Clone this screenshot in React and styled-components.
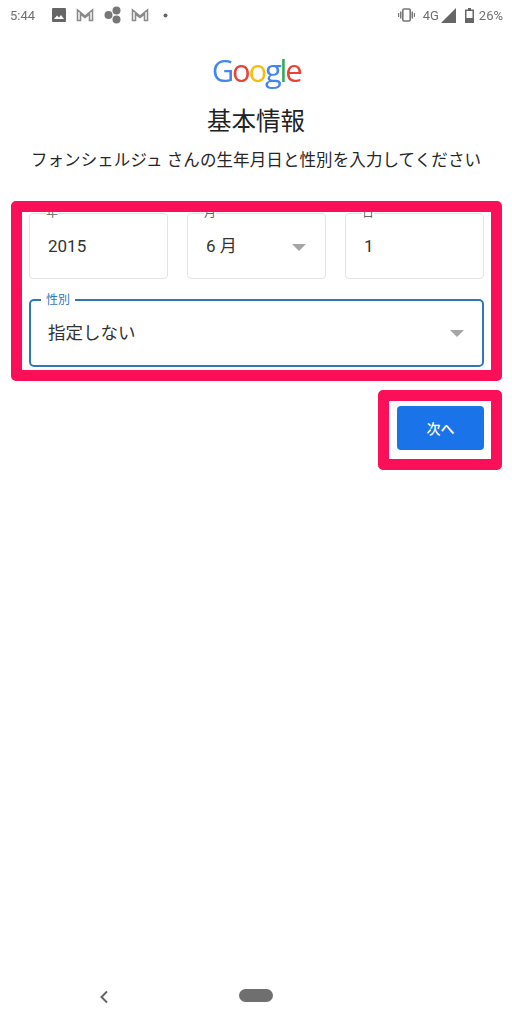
import React from "react";
import styled, { createGlobalStyle } from "styled-components";

const Global = createGlobalStyle`
  html, body { margin: 0; padding: 0; background: #fff; }
  body { font-family: Roboto, "Noto Sans CJK JP", sans-serif; }
  * { box-sizing: border-box; }
`;

const Page = styled.div`
  width: 512px;
  height: 1024px;
  display: flex;
  flex-direction: column;
  overflow: hidden;
  background: #fff;
  color: #222;
`;

const StatusBar = styled.div`
  height: 30px;
  display: flex;
  align-items: center;
  justify-content: space-between;
  padding: 0 9px 0 10px;
  color: #707070;
  font-size: 13px;
  filter: blur(0.4px);
`;

const StatusGroup = styled.div`
  display: flex;
  align-items: center;
`;

const StatusSvg = styled.svg`
  display: block;
  flex: none;
  margin-left: ${(p) => p.$ml || 0}px;
`;

const StatusText = styled.span`
  margin-left: ${(p) => p.$ml || 0}px;
`;

const Wordmark = styled.div`
  margin-top: 19px;
  height: 42px;
  text-align: center;
  font-family: "Open Sans", sans-serif;
  font-size: 31px;
  line-height: 42px;
  letter-spacing: -2.2px;
  font-weight: 500;
  filter: blur(0.3px);
`;

const Letter = styled.span`
  color: ${(p) => p.$c};
`;

const Title = styled.h1`
  margin: 14px 0 0;
  text-align: center;
  font-size: 24.5px;
  line-height: 34px;
  font-weight: 400;
  color: #222;
`;

const Subtitle = styled.p`
  margin: 10px 0 0;
  text-align: center;
  font-size: 16.5px;
  line-height: 24px;
  color: #262626;
  letter-spacing: 0.1px;
`;

const Highlight = styled.div`
  margin: ${(p) => p.$mt}px 10px 0 ${(p) => p.$ml}px;
  border: 11px solid #fb0f58;
  border-radius: 5px;
  overflow: hidden;
  background: #fff;
`;

const FieldRow = styled.div`
  display: grid;
  grid-template-columns: 139px 139px 139px;
  gap: 19px;
  padding: 1px 7px 0;
`;

const Field = styled.div`
  position: relative;
  height: 66px;
  border: 1px solid #e4e4e4;
  border-radius: 4px;
  padding: 20px 0 0 18px;
  font-size: 17px;
  line-height: 24px;
  color: #333;
`;

const TopLabel = styled.span`
  position: absolute;
  left: 16px;
  top: -9px;
  font-size: 12px;
  line-height: 16px;
  color: #666;
  background: #fff;
`;

const Caret = styled.span`
  position: absolute;
  right: ${(p) => p.$r}px;
  top: ${(p) => p.$t}px;
  width: 0;
  height: 0;
  border-left: 7px solid transparent;
  border-right: 7px solid transparent;
  border-top: 7px solid #a6a6a6;
`;

const GenderWrap = styled.div`
  padding: 20px 7px 3px;
`;

const GenderField = styled.div`
  position: relative;
  height: 68px;
  border: 2px solid #3278b8;
  border-radius: 5px;
  padding: 20px 0 0 17px;
  font-size: 17.5px;
  line-height: 24px;
  color: #333;
`;

const GenderLabel = styled.span`
  position: absolute;
  left: 10px;
  top: -8px;
  padding: 0 5px;
  background: #fff;
  font-size: 12px;
  line-height: 14px;
  color: #3278b8;
`;

const ActionRow = styled.div`
  display: flex;
  justify-content: flex-end;
`;

const NextButton = styled.button`
  display: block;
  width: 87px;
  height: 44px;
  margin: 5px 7px 9px 8px;
  border: 0;
  border-radius: 4px;
  background: #1a73e8;
  color: #fff;
  font: 500 14px Roboto, "Noto Sans CJK JP", sans-serif;
`;

const NavBar = styled.div`
  margin-top: auto;
  height: 42px;
  display: flex;
  align-items: flex-start;
  padding: 7px 0 0 99px;
`;

const BackIcon = styled.svg`
  display: block;
  margin-top: 1px;
`;

const Pill = styled.div`
  width: 34px;
  height: 13px;
  border-radius: 7px;
  background: #6f6f6f;
  margin-left: 130px;
`;

const Gmail = ({ ml }) => (
  <StatusSvg $ml={ml} width="18" height="14" viewBox="0 0 18 14" fill="none" stroke="#8a8a8a" strokeWidth="1.6">
    <path d="M1.5 12.5V2l7.500 6 7.500-6v10.500h-3V6L9 9.500 4.500 6v6.500z" />
  </StatusSvg>
);

export default function App() {
  return (
    <Page>
      <Global />
      <StatusBar>
        <StatusGroup>
          <span>5:44</span>
          <StatusSvg $ml={17} width="14" height="14" viewBox="0 0 14 14">
            <rect width="14" height="14" rx="1" fill="#666" />
            <path d="M2 11l3-3.500 2 2 2-2.500 3 4z" fill="#fff" />
          </StatusSvg>
          <Gmail ml={10} />
          <StatusSvg $ml={10} width="18" height="18" viewBox="0 0 18 18" fill="#777">
            <circle cx="4.500" cy="9" r="4" />
            <circle cx="12.500" cy="4.500" r="4" />
            <circle cx="12.500" cy="13.500" r="4" />
          </StatusSvg>
          <Gmail ml={9} />
          <StatusSvg $ml={14} width="5" height="5" viewBox="0 0 5 5">
            <circle cx="2.500" cy="2.500" r="2" fill="#666" />
          </StatusSvg>
        </StatusGroup>
        <StatusGroup>
          <StatusSvg width="17" height="14" viewBox="0 0 17 14" fill="#777">
            <rect x="4.800" y="1" width="7.400" height="12" rx="1.200" fill="none" stroke="#777" strokeWidth="1.600" />
            <rect x="2" y="3.500" width="1.500" height="7" />
            <rect x="13.500" y="3.500" width="1.500" height="7" />
            <rect x="0" y="5" width="1.200" height="4" />
            <rect x="15.800" y="5" width="1.200" height="4" />
          </StatusSvg>
          <StatusText $ml={8}>4G</StatusText>
          <StatusSvg $ml={2} width="15" height="15" viewBox="0 0 15 15">
            <path d="M15 0v15H0z" fill="#666" />
          </StatusSvg>
          <StatusSvg $ml={9} width="9" height="15" viewBox="0 0 9 15">
            <path d="M3 0h3v1.500h3V15H0V1.500h3z" fill="#666" />
            <rect x="1.500" y="3" width="6" height="7" fill="#fff" />
          </StatusSvg>
          <StatusText $ml={5}>26%</StatusText>
        </StatusGroup>
      </StatusBar>

      <Wordmark>
        <Letter $c="#4285f4">G</Letter>
        <Letter $c="#ea4335">o</Letter>
        <Letter $c="#fbbc05">o</Letter>
        <Letter $c="#4285f4">g</Letter>
        <Letter $c="#34a853">l</Letter>
        <Letter $c="#ea4335">e</Letter>
      </Wordmark>

      <Title>基本情報</Title>
      <Subtitle>フォンシェルジュ さんの生年月日と性別を入力してください</Subtitle>

      <Highlight $mt={28} $ml={11}>
        <FieldRow>
          <Field>
            <TopLabel>年</TopLabel>
            2015
          </Field>
          <Field>
            <TopLabel>月</TopLabel>
            6 月
            <Caret $r={19} $t={30} />
          </Field>
          <Field>
            <TopLabel>日</TopLabel>
            1
          </Field>
        </FieldRow>
        <GenderWrap>
          <GenderField>
            <GenderLabel>性別</GenderLabel>
            指定しない
            <Caret $r={18} $t={29} />
          </GenderField>
        </GenderWrap>
      </Highlight>

      <ActionRow>
        <Highlight $mt={9} $ml={0}>
          <NextButton>次へ</NextButton>
        </Highlight>
      </ActionRow>

      <NavBar>
        <BackIcon width="10" height="14" viewBox="0 0 10 14" fill="none" stroke="#666" strokeWidth="2">
          <path d="M8 1.500L2.500 7 8 12.500" />
        </BackIcon>
        <Pill />
      </NavBar>
    </Page>
  );
}
